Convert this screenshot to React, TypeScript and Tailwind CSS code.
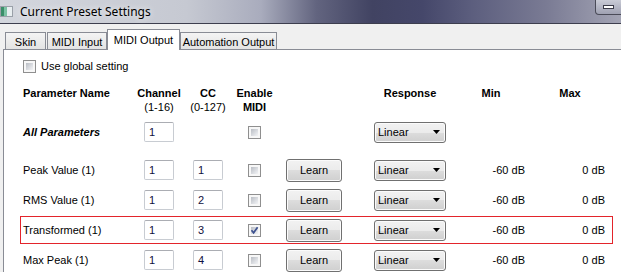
import React from 'react'

type Param = { name: string; cc: string; enabled: boolean; marked?: boolean }

const params: Param[] = [
  { name: 'Peak Value (1)', cc: '1', enabled: false },
  { name: 'RMS Value (1)', cc: '2', enabled: false },
  { name: 'Transformed (1)', cc: '3', enabled: true, marked: true },
  { name: 'Max Peak (1)', cc: '4', enabled: false },
]

function CheckBox({ checked = false }: { checked?: boolean }) {
  return (
    <div className="relative w-[13px] h-[13px] shrink-0 border border-[#8f8f8f] bg-[#f7f7f7] p-[2px]">
      <div className="w-full h-full bg-[linear-gradient(135deg,#b9bdc4,#e2e4e8_70%,#f2f3f4)]" />
      {checked && (
        <svg className="absolute left-[1px] top-[1px]" width="9" height="9" viewBox="0 0 9 9">
          <path d="M1.5 4.2 L3.6 6.8 L7.6 1.2" fill="none" stroke="#3d518f" strokeWidth="1.7" />
        </svg>
      )}
    </div>
  )
}

function Field({ value }: { value: string }) {
  return (
    <div className="w-[30px] h-[20px] shrink-0 border border-[#c8ccd2] border-t-[#abadb3] rounded-[2px] bg-white pl-[4px] leading-[18px] text-[#101040]">
      {value}
    </div>
  )
}

function LearnButton() {
  return (
    <div className="w-[56px] h-[23px] shrink-0 rounded-[3px] border border-[#707070] bg-[linear-gradient(#f2f2f2_0%,#ebebeb_50%,#dddddd_50%,#cfcfcf_100%)] shadow-[inset_0_0_0_1px_#fbfbfb] flex items-center justify-center">
      Learn
    </div>
  )
}

function Dropdown() {
  return (
    <div className="w-[72px] h-[21px] shrink-0 rounded-[3px] border border-[#707070] bg-[linear-gradient(#f2f2f2_0%,#ebebeb_50%,#dddddd_50%,#cfcfcf_100%)] shadow-[inset_0_0_0_1px_#fbfbfb] flex items-center justify-between pl-[3px] pr-[5px]">
      <span>Linear</span>
      <svg width="7" height="4" viewBox="0 0 7 4"><path d="M0 0H7L3.5 4Z" fill="#000" /></svg>
    </div>
  )
}

function Tab({ label, width, active }: { label: string; width: string; active?: boolean }) {
  if (active)
    return (
      <div className={`relative z-10 -mb-px h-[21px] ${width} border border-b-0 border-[#898c95] bg-white flex justify-center pt-[2px]`}>
        {label}
      </div>
    )
  return (
    <div className={`h-[17px] ${width} border border-b-0 border-[#898c95] bg-[linear-gradient(#f4f4f4,#e3e3e3)] flex justify-center pt-[1px]`}>
      {label}
    </div>
  )
}

export default function App() {
  return (
    <div className="w-[621px] h-[272px] overflow-hidden bg-[#f0f0f0] font-['Liberation_Sans',Arial,sans-serif] text-[11px] text-black">
      {/* title bar */}
      <div className="relative h-[24px] border-b border-[#3d3e4e] bg-[linear-gradient(to_right,#d3d6dd_0%,#c6c9d2_30%,#a9acbd_42%,#62647f_51%,#414362_60%,#45476a_68%,#5c5e7e_76%,#7a7b94_88%,#a3a4b4_100%)] flex items-center">
        <div className="ml-0 w-[13px] h-[11px] flex border border-[#9aa0a8] bg-white">
          <div className="w-[3px] bg-[#3b8f6a]" />
          <div className="w-[3px] bg-[#7cc2a4]" />
          <div className="w-[5px] bg-[#e8eef0]" />
        </div>
        <span className="ml-[7px] font-['Noto_Sans',sans-serif] text-[12px] [text-shadow:0_0_6px_#ffffff]">Current Preset Settings</span>
        <div className="absolute right-[-4px] top-0 w-[30px] h-[15px] rounded-bl-[4px] border border-t-0 border-[#4a4b58] bg-[linear-gradient(#c9cbd6,#9fa1b2)] flex items-center pl-[7px]">
          <div className="w-[11px] h-[4px] border border-[#3a3b48] bg-white" />
        </div>
      </div>

      {/* tabs */}
      <div className="h-[25px] flex items-end pl-[5px]">
        <Tab label="Skin" width="w-[41px]" />
        <div className="w-[1px]" />
        <Tab label="MIDI Input" width="w-[60px]" />
        <Tab label="MIDI Output" width="w-[73px]" active />
        <Tab label="Automation Output" width="w-[97px]" />
      </div>

      {/* panel */}
      <div className="ml-[3px] h-[223px] border-l border-t border-[#898c95] bg-white pl-[16px] pt-[10px]">
        <div className="flex items-center gap-[5px] pl-[3px] h-[13px]">
          <CheckBox />
          <span>Use global setting</span>
        </div>

        {/* header */}
        <div className="mt-[13px] w-[593px] border-x border-transparent pl-[2px] flex font-bold leading-[14px]">
          <div className="w-[121px] shrink-0">Parameter Name</div>
          <div className="w-[30px] shrink-0 flex flex-col items-center whitespace-nowrap">
            <span>Channel</span>
            <span className="font-normal">(1-16)</span>
          </div>
          <div className="w-[19px] shrink-0" />
          <div className="w-[30px] shrink-0 flex flex-col items-center whitespace-nowrap">
            <span>CC</span>
            <span className="font-normal">(0-127)</span>
          </div>
          <div className="w-[25px] shrink-0" />
          <div className="w-[13px] shrink-0 flex flex-col items-center whitespace-nowrap">
            <span>Enable</span>
            <span>MIDI</span>
          </div>
          <div className="w-[113px] shrink-0" />
          <div className="w-[72px] shrink-0 flex flex-col items-center whitespace-nowrap">Response</div>
          <div className="w-[79px] shrink-0 pl-[11px] flex flex-col items-center">Min</div>
          <div className="w-[80px] shrink-0 pl-[10px] flex flex-col items-center">Max</div>
        </div>

        {/* all parameters */}
        <div className="mt-[4px] h-[28px] w-[593px] border border-transparent pl-[2px] flex items-center">
          <div className="w-[121px] shrink-0 font-bold italic">All Parameters</div>
          <Field value="1" />
          <div className="w-[74px] shrink-0" />
          <CheckBox />
          <div className="w-[113px] shrink-0" />
          <Dropdown />
        </div>

        {/* parameter rows */}
        <div className="mt-[10px] flex flex-col gap-[2px]">
          {params.map((p) => (
            <div
              key={p.name}
              className={`h-[28px] w-[593px] border pl-[2px] flex items-center ${p.marked ? 'border-[#e3242b]' : 'border-transparent'}`}
            >
              <div className="w-[121px] shrink-0">{p.name}</div>
              <Field value="1" />
              <div className="w-[19px] shrink-0" />
              <Field value={p.cc} />
              <div className="w-[25px] shrink-0" />
              <CheckBox checked={p.enabled} />
              <div className="w-[25px] shrink-0" />
              <LearnButton />
              <div className="w-[32px] shrink-0" />
              <Dropdown />
              <div className="w-[79px] shrink-0 text-right">-60 dB</div>
              <div className="w-[80px] shrink-0 text-right">0 dB</div>
            </div>
          ))}
        </div>
      </div>
    </div>
  )
}
